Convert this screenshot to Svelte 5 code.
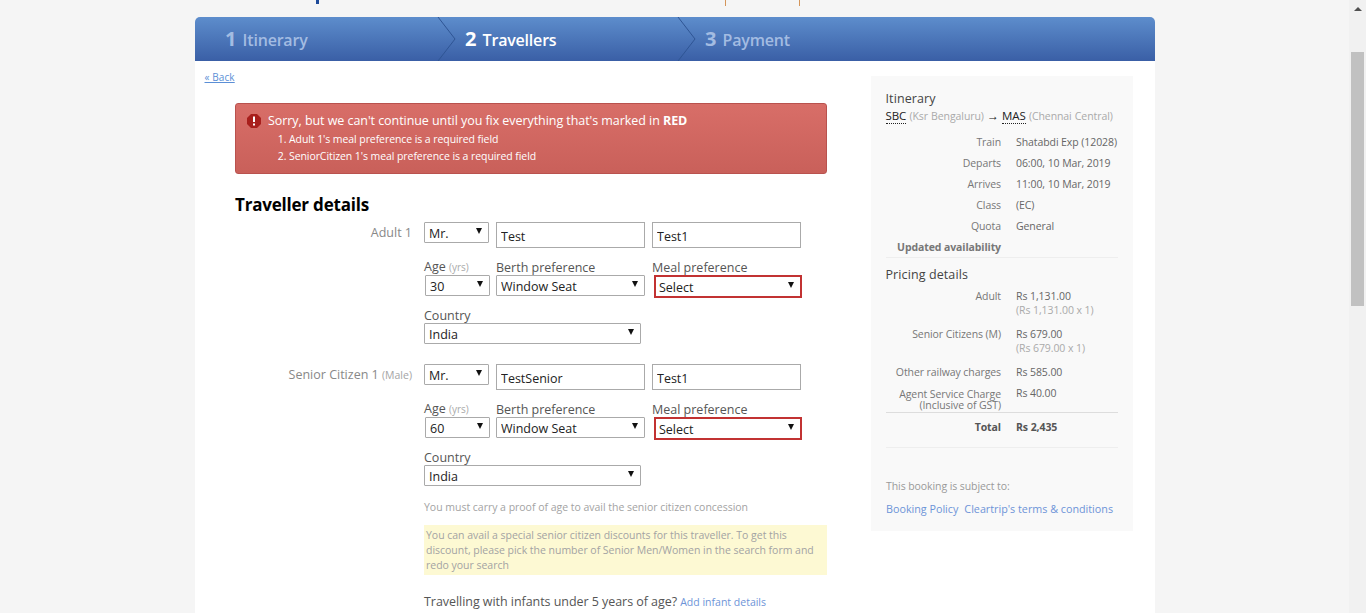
<script>
	const steps = [
		{ num: 1, label: 'Itinerary' },
		{ num: 2, label: 'Travellers', active: true },
		{ num: 3, label: 'Payment' }
	];

	const travellers = [
		{ label: 'Adult 1', note: '', first: 'Test', last: 'Test1', age: '30' },
		{ label: 'Senior Citizen 1', note: '(Male)', first: 'TestSenior', last: 'Test1', age: '60' }
	];

	const itinerary = [
		['Train', 'Shatabdi Exp (12028)'],
		['Departs', '06:00, 10 Mar, 2019'],
		['Arrives', '11:00, 10 Mar, 2019'],
		['Class', '(EC)'],
		['Quota', 'General']
	];

	const pricing = [
		{ label: 'Adult', value: 'Rs 1,131.00', sub: '(Rs 1,131.00 x 1)' },
		{ label: 'Senior Citizens (M)', value: 'Rs 679.00', sub: '(Rs 679.00 x 1)' },
		{ label: 'Other railway charges', value: 'Rs 585.00' }
	];
</script>

<div class="screen">
	<div class="page">
		<div class="wrap">
			<header class="top">
				<i class="logo-bit"></i>
				<i class="rule first"></i>
				<i class="rule"></i>
			</header>

			<nav class="steps">
				{#each steps as step}
					<div class="step" class:active={step.active}>
						<b>{step.num}</b> <span>{step.label}</span>
						<svg class="chevron" width="20" height="44" viewBox="0 0 20 44">
							<path d="M1 0 L18 22 L1 44" fill="none" stroke="#2f5594" stroke-width="1" />
						</svg>
					</div>
				{/each}
			</nav>

			<div class="content">
				<main class="form">
					<a class="back" href="#back">« Back</a>

					<div class="error">
						<div class="error-title">
							<svg width="14" height="14" viewBox="0 0 14 14">
								<path d="M4 0 H10 L14 4 V10 L10 14 H4 L0 10 V4 Z" fill="#a81f1c" />
								<rect x="6" y="2.5" width="2" height="5.5" fill="#fff" />
								<rect x="6" y="9.5" width="2" height="2" fill="#fff" />
							</svg>
							<span>Sorry, but we can't continue until you fix everything that's marked in <b>RED</b></span>
						</div>
						<ol>
							<li>Adult 1's meal preference is a required field</li>
							<li>SeniorCitizen 1's meal preference is a required field</li>
						</ol>
					</div>

					<h2>Traveller details</h2>

					{#each travellers as t}
						<section class="traveller">
							<div class="who">{t.label} <small>{t.note}</small></div>
							<div class="fields">
								<div class="row name">
									<div class="sel title"><select><option>Mr.</option></select></div>
									<input value={t.first} />
									<input value={t.last} />
								</div>
								<div class="row prefs">
									<label class="age">
										<span class="cap">Age <small>(yrs)</small></span>
										<div class="sel"><select><option>{t.age}</option></select></div>
									</label>
									<label class="berth">
										<span class="cap">Berth preference</span>
										<div class="sel"><select><option>Window Seat</option></select></div>
									</label>
									<label class="meal">
										<span class="cap">Meal preference</span>
										<div class="sel bad"><select><option>Select</option></select></div>
									</label>
								</div>
								<label class="country">
									<span class="cap">Country</span>
									<div class="sel"><select><option>India</option></select></div>
								</label>
							</div>
						</section>
					{/each}

					<div class="after">
						<p class="proof">You must carry a proof of age to avail the senior citizen concession</p>
						<p class="discount">You can avail a special senior citizen discounts for this traveller. To get this discount, please pick the number of Senior Men/Women in the search form and redo your search</p>
						<p class="infants">Travelling with infants under 5 years of age? <a href="#infant">Add infant details</a></p>
					</div>
				</main>

				<aside class="side">
					<h3>Itinerary</h3>
					<p class="route">
						<abbr>SBC</abbr> <span>(Ksr Bengaluru)</span> <b>→</b> <abbr>MAS</abbr> <span>(Chennai Central)</span>
					</p>
					<dl class="list">
						{#each itinerary as [k, v]}
							<div class="line"><dt>{k}</dt><dd>{v}</dd></div>
						{/each}
						<div class="line avail"><dt>Updated availability</dt></div>
					</dl>

					<h3 class="pricing-title">Pricing details</h3>
					<dl class="list prices">
						{#each pricing as p}
							<div class="line">
								<dt>{p.label}</dt>
								<dd>{p.value}{#if p.sub}<em>{p.sub}</em>{/if}</dd>
							</div>
						{/each}
						<div class="line agent">
							<dt>Agent Service Charge<br />(Inclusive of GST)</dt>
							<dd>Rs 40.00</dd>
						</div>
						<div class="line total"><dt>Total</dt><dd>Rs 2,435</dd></div>
					</dl>

					<p class="subject">This booking is subject to:</p>
					<p class="policy">
						<a href="#policy">Booking Policy</a>
						<a href="#terms">Cleartrip's terms &amp; conditions</a>
					</p>
				</aside>
			</div>
		</div>
	</div>

	<div class="scrollbar">
		<i class="arrow"></i>
		<i class="thumb"></i>
	</div>
</div>

<style>
	:global(body) {
		margin: 0;
		overflow: hidden;
	}

	.screen {
		display: flex;
		height: 613px;
		overflow: hidden;
		background: #f5f5f5;
		font-family: "Open Sans", "Noto Sans", sans-serif;
		font-size: 11px;
		color: #555;
	}

	.page {
		flex: 1;
		min-width: 0;
	}

	.wrap {
		width: 960px;
		margin-left: 195px;
	}

	.scrollbar {
		flex: none;
		width: 17px;
		background: #f1f1f1;
		display: flex;
		flex-direction: column;
		align-items: center;
	}

	.arrow {
		margin-top: 7px;
		width: 0;
		height: 0;
		border: 4px solid transparent;
		border-top: 0;
		border-bottom: 4px solid #505050;
	}

	.thumb {
		margin-top: 41px;
		width: 13px;
		height: 254px;
		background: #c1c1c1;
	}

	.top {
		height: 17px;
		display: flex;
		align-items: flex-start;
	}

	.logo-bit {
		width: 3px;
		height: 4px;
		margin-left: 121px;
		background: #1d4a9a;
	}

	.rule {
		width: 1px;
		height: 6px;
		margin-left: 73px;
		background: #d4955a;
	}

	.rule.first {
		margin-left: 406px;
	}

	.steps {
		display: flex;
		height: 44px;
		border-radius: 5px 5px 0 0;
		background: linear-gradient(#5d8dcc, #3a5fa6);
		overflow: hidden;
	}

	.step {
		position: relative;
		width: 240px;
		padding-left: 30px;
		box-sizing: border-box;
		line-height: 44px;
		font-size: 16px;
		font-weight: 600;
		color: #a3bce2;
		white-space: nowrap;
	}

	.step b {
		font-size: 20px;
		font-weight: 700;
		margin-right: 2px;
	}

	.step span {
		letter-spacing: -0.2px;
	}

	.step.active {
		color: #fff;
	}

	.chevron {
		position: absolute;
		left: 242px;
		top: 0;
	}

	.step:last-child .chevron {
		display: none;
	}

	.content {
		display: flex;
		background: #fff;
		height: 552px;
		overflow: hidden;
	}

	a {
		color: #6d94d8;
		text-decoration: none;
	}

	.form {
		width: 592px;
		margin-left: 40px;
		flex: none;
		position: relative;
	}

	.back {
		display: block;
		margin: 9px 0 0 -30.5px;
		height: 16px;
		line-height: 15px;
		font-size: 10px;
		text-decoration: underline;
		color: #5b8fd6;
		letter-spacing: 0.1px;
	}

	.error {
		margin-top: 17px;
		height: 71px;
		box-sizing: border-box;
		padding: 8px 11px;
		background: linear-gradient(#d86e68, #c9605a);
		border: 1px solid #b9524e;
		border-radius: 3px;
		color: #fff;
	}

	.error-title {
		display: flex;
		align-items: center;
		gap: 7px;
		height: 17px;
		font-size: 12.5px;
		letter-spacing: -0.06px;
		white-space: nowrap;
	}

	.error ol {
		margin: 2px 0 0;
		padding-left: 42px;
		font-size: 10.5px;
		letter-spacing: -0.08px;
		line-height: 17px;
	}

	h2 {
		margin: 21px 0 0;
		height: 19px;
		line-height: 19px;
		font-size: 17px;
		font-weight: 700;
		color: #000;
		letter-spacing: -0.2px;
	}

	.traveller {
		display: grid;
		grid-template-columns: 177px 1fr;
		gap: 12px;
		margin-top: 20px;
	}

	h2 + .traveller {
		margin-top: 8px;
	}

	.who {
		text-align: right;
		font-size: 12.5px;
		line-height: 22px;
		color: #888;
	}

	.who small {
		font-size: 10.5px;
		color: #a5a5a5;
	}

	.row {
		display: flex;
		gap: 7px;
	}

	.name {
		height: 26px;
		align-items: flex-start;
	}

	input {
		width: 149px;
		height: 26px;
		box-sizing: border-box;
		border: 1px solid #aaa;
		padding: 2px 4px 0;
		font: 12.5px "Open Sans", sans-serif;
		color: #222;
		background: #fff;
		border-radius: 0;
		outline: none;
	}

	.sel {
		position: relative;
		height: 21px;
	}

	.sel::after {
		content: "";
		position: absolute;
		right: 7px;
		top: 6px;
		border: 3.5px solid transparent;
		border-top: 6px solid #111;
		border-bottom: 0;
	}

	select {
		appearance: none;
		display: block;
		width: 100%;
		height: 100%;
		box-sizing: border-box;
		border: 1px solid #aaa;
		border-radius: 1px;
		background: #fff;
		padding: 1px 4px 0;
		font: 12.5px "Open Sans", sans-serif;
		color: #222;
		outline: none;
	}

	.title {
		width: 65px;
	}

	.prefs {
		margin-top: 11px;
		height: 50px;
	}

	label {
		display: block;
	}

	.cap {
		display: block;
		height: 16px;
		line-height: 18px;
		font-size: 12.5px;
		color: #555;
		white-space: nowrap;
	}

	.cap small {
		font-size: 10px;
		color: #aaa;
	}

	.age {
		width: 65px;
		margin-left: 1px;
	}

	.age .cap {
		margin-left: -1px;
		position: relative;
		top: -1px;
	}

	.berth {
		width: 149px;
		margin-left: -1px;
	}

	.meal {
		width: 150px;
	}

	.sel.bad {
		margin-left: 2px;
		height: 23px;
	}

	.sel.bad::after {
		top: 7px;
		right: 8px;
	}

	.bad select {
		border: 2px solid #c23232;
		border-radius: 0;
		padding: 2px 3px 0;
	}

	.country {
		width: 217px;
		margin-top: -2px;
	}

	.after {
		margin-left: 189px;
	}

	.after p {
		margin: 0;
	}

	.proof {
		padding-top: 14px;
		line-height: 15px;
		font-size: 10.5px;
		color: #a3a3a3;
		letter-spacing: -0.02px;
		white-space: nowrap;
	}

	.after .discount {
		margin-top: 10px;
		height: 50px;
		box-sizing: border-box;
		padding: 3px 2px 2px;
		background: #fdf9d3;
		line-height: 15px;
		font-size: 10.5px;
		color: #a3a3a3;
		letter-spacing: -0.02px;
	}

	.after .infants {
		margin-top: 18px;
		font-size: 12.5px;
		letter-spacing: -0.05px;
		white-space: nowrap;
	}

	.infants a {
		font-size: 10.5px;
		letter-spacing: 0;
	}

	.side {
		flex: none;
		box-sizing: border-box;
		width: 262px;
		height: 455px;
		margin: 15px 0 0 44px;
		padding: 15px 15px 0 15px;
		background: #f9f9f9;
		font-size: 10.5px;
		letter-spacing: -0.08px;
	}

	h3 {
		margin: 0 0 0 -0.5px;
		font-size: 12.5px;
		line-height: 16px;
		font-weight: 400;
		color: #444;
		letter-spacing: 0.1px;
	}

	.route {
		margin: 1px 0 0 -0.5px;
		line-height: 16px;
		color: #aaa;
		white-space: nowrap;
		word-spacing: 0.5px;
	}

	.route b {
		color: #111;
		font-weight: 400;
		font-size: 12px;
	}

	abbr {
		color: #222;
		font-size: 11.5px;
		border-bottom: 1px dotted #222;
	}

	.list {
		margin: 8px 0 0;
		width: 232px;
	}

	.line {
		display: grid;
		grid-template-columns: 115px 1fr;
		gap: 15px;
		min-height: 21px;
		line-height: 15px;
		padding-top: 3px;
		box-sizing: border-box;
	}

	dt {
		text-align: right;
		color: #777;
		white-space: nowrap;
	}

	dd {
		margin: 0;
		color: #666;
		white-space: nowrap;
	}

	dd em {
		display: block;
		margin-top: -1px;
		font-style: normal;
		color: #aaa;
		line-height: 14px;
	}

	.avail {
		border-bottom: 1px solid #eee;
	}

	.avail dt {
		font-weight: 700;
		letter-spacing: -0.1px;
	}

	.pricing-title {
		margin-top: 9px;
	}

	.prices {
		margin-top: 3px;
	}

	.prices .line:nth-child(1),
	.prices .line:nth-child(2) {
		height: 38px;
	}

	.agent {
		line-height: 11px;
		height: 30px;
		border-bottom: 1px solid #ddd;
	}

	.agent dt {
		padding-top: 3px;
	}

	.agent dd {
		line-height: 15px;
	}

	.line.total {
		height: 35px;
		padding-top: 7px;
		border-bottom: 1px solid #eee;
		font-weight: 700;
	}

	.total dt,
	.total dd {
		color: #555;
	}

	.subject {
		margin: 31px 0 0;
		line-height: 15px;
		color: #999;
	}

	.policy {
		margin: 8px 0 0;
		line-height: 15px;
		display: flex;
		gap: 6px;
		font-size: 10.75px;
		white-space: nowrap;
		letter-spacing: 0;
	}
</style>
